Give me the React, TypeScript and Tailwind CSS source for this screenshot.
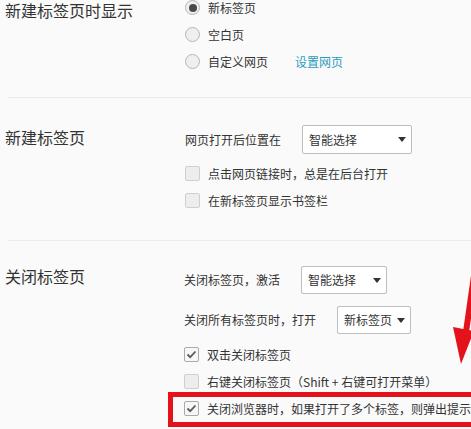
import React from "react";

const font = { fontFamily: '"Noto Sans CJK SC", "Noto Sans", sans-serif' };

function Radio({ checked }: { checked?: boolean }) {
  return (
    <span className="flex h-[15px] w-[15px] shrink-0 items-center justify-center rounded-full border border-[#b5b5b5] bg-[#efefef]">
      {checked && <span className="h-[8px] w-[8px] rounded-full bg-[#4a4a4a]" />}
    </span>
  );
}

function Checkbox({ checked }: { checked?: boolean }) {
  return (
    <span
      className={
        "flex h-[15px] w-[15px] shrink-0 items-center justify-center rounded-[2px] border " +
        (checked ? "border-[#aaaaaa] bg-[#f7f7f7]" : "border-[#cfcfcf] bg-[#ededed]")
      }
    >
      {checked && (
        <svg width="11" height="9" viewBox="0 0 11 9">
          <path d="M1.5 4.5 L4.2 7.2 L9.5 1.5" fill="none" stroke="#5a5a5a" strokeWidth="1.8" />
        </svg>
      )}
    </span>
  );
}

function Select({ text, width, height }: { text: string; width: string; height: string }) {
  return (
    <div
      className={
        "flex items-center justify-between rounded-[2px] border border-[#bdbdbd] bg-white pl-[6px] pr-[5px] text-[12px] text-[#333] " +
        width +
        " " +
        height
      }
    >
      <span className="leading-none">{text}</span>
      <svg width="8" height="5" viewBox="0 0 8 5">
        <path d="M0 0 H8 L4 5 Z" fill="#333" />
      </svg>
    </div>
  );
}

function Row({ children }: { children: React.ReactNode }) {
  return <div className="flex h-[15px] items-center gap-[8px] text-[12px] leading-none text-[#333]">{children}</div>;
}

export default function App() {
  return (
    <div className="relative h-[429px] w-[471px] overflow-hidden bg-[#fafafa]" style={font}>
      {/* Section 1 */}
      <div className="flex h-[97px]">
        <div className="w-[185px] pl-[5px] text-[16px] leading-[20px] text-[#333]">新建标签页时显示</div>
        <div className="flex flex-col gap-[12px]">
          <Row>
            <Radio checked />
            <span>新标签页</span>
          </Row>
          <Row>
            <Radio />
            <span>空白页</span>
          </Row>
          <Row>
            <Radio />
            <span>自定义网页</span>
            <span className="ml-[19px] text-[#2a9cbf]">设置网页</span>
          </Row>
        </div>
      </div>
      <div className="ml-[8px] h-px bg-[#ececec]" />

      {/* Section 2 */}
      <div className="flex h-[142px]">
        <div className="w-[185px] pl-[5px] pt-[29px] text-[16px] leading-[20px] text-[#333]">新建标签页</div>
        <div className="flex flex-col pt-[27px]">
          <div className="flex items-center gap-[21px] text-[12px] text-[#333]">
            <span className="leading-none">网页打开后位置在</span>
            <Select text="智能选择" width="w-[110px]" height="h-[29px]" />
          </div>
          <div className="mt-[12px] flex flex-col gap-[12px]">
            <Row>
              <Checkbox />
              <span>点击网页链接时，总是在后台打开</span>
            </Row>
            <Row>
              <Checkbox />
              <span>在新标签页显示书签栏</span>
            </Row>
          </div>
        </div>
      </div>
      <div className="ml-[8px] h-px bg-[#ececec]" />

      {/* Section 3 */}
      <div className="flex">
        <div className="w-[185px] pl-[5px] pt-[25px] text-[16px] leading-[20px] text-[#333]">关闭标签页</div>
        <div className="flex flex-col pt-[25px]">
          <div className="flex items-center gap-[21px] text-[12px] text-[#333]">
            <span className="leading-none">关闭标签页，激活</span>
            <Select text="智能选择" width="w-[86px]" height="h-[28px]" />
          </div>
          <div className="mt-[12px] flex items-center gap-[21px] text-[12px] text-[#333]">
            <span className="leading-none">关闭所有标签页时，打开</span>
            <Select text="新标签页" width="w-[74px]" height="h-[28px]" />
          </div>
          <div className="mt-[13px] flex flex-col gap-[12px]">
            <Row>
              <Checkbox checked />
              <span>双击关闭标签页</span>
            </Row>
            <Row>
              <Checkbox />
              <span>右键关闭标签页（Shift + 右键可打开菜单）</span>
            </Row>
            <Row>
              <Checkbox checked />
              <span className="whitespace-nowrap">关闭浏览器时，如果打开了多个标签，则弹出提示</span>
            </Row>
          </div>
        </div>
      </div>

      {/* Red annotation box */}
      <div className="pointer-events-none absolute left-[168px] top-[392px] h-[35px] w-[320px] border-[5px] border-[#e3131b]" />

      {/* Red arrow */}
      <svg className="pointer-events-none absolute left-0 top-0" width="471" height="429" viewBox="0 0 471 429">
        <line x1="476" y1="262" x2="466" y2="332" stroke="#e3131b" strokeWidth="6" />
        <polygon points="453,327 474,331 461,364" fill="#e3131b" />
      </svg>
    </div>
  );
}
